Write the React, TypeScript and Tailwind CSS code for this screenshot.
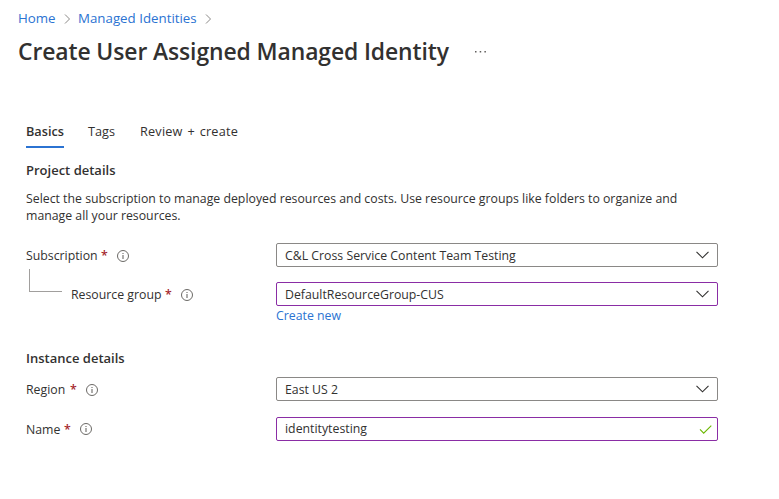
import React from 'react';

function Crumb() {
  return (
    <svg width="7" height="10" viewBox="0 0 7 10" fill="none" stroke="#8a8886" className="mt-px shrink-0">
      <path d="M1 .5 5.5 5 1 9.5" />
    </svg>
  );
}

function Info({ className }: { className: string }) {
  return (
    <svg width="12" height="12" viewBox="0 0 12 12" fill="none" stroke="#6b6966" className={`shrink-0 ${className}`}>
      <circle cx="6" cy="6" r="5.5" />
      <path d="M6 5v4M6 2.9V4" strokeWidth="1.1" />
    </svg>
  );
}

function Chevron() {
  return (
    <svg width="13" height="8" viewBox="0 0 13 8" fill="none" stroke="#323130" strokeWidth="1.1" className="mr-[8px] shrink-0">
      <path d="M.5.8 6.5 6.8 12.5.8" />
    </svg>
  );
}

function Label({ text, width, info = 'mt-px' }: { text: string; width: string; info?: string }) {
  return (
    <div className="flex h-6 items-center whitespace-nowrap">
      <span className={width}>{text}</span>
      <span className="w-[16px] font-semibold text-[#a4262c]">*</span>
      <Info className={info} />
    </div>
  );
}

function Field({ accent, children }: { accent?: boolean; children: React.ReactNode }) {
  return (
    <div
      className={`flex h-6 w-[442px] items-center justify-between rounded-[2px] border pl-2 ${
        accent ? 'border-[#8a2da5]' : 'border-[#8a8886]'
      }`}
    >
      {children}
    </div>
  );
}

export default function App() {
  return (
    <main className="h-[499px] w-[779px] overflow-hidden bg-white font-['Open_Sans','Noto_Sans',sans-serif] text-[12.3px] leading-[17px] text-[#323130]">
      <nav className="mt-[9px] flex h-[18px] items-center pl-[18px] text-[13.3px] text-[#2b73d2]">
        <span className="w-[46px]">Home</span>
        <Crumb />
        <span className="ml-[7px] w-[127px] whitespace-nowrap">Managed Identities</span>
        <Crumb />
      </nav>
      <header className="mt-[9px] flex h-8 items-center pl-[18px]">
        <h1 className="w-[457px] whitespace-nowrap text-[22.9px] font-[560] leading-8 tracking-[-0.1px]">
          Create User Assigned Managed Identity
        </h1>
        <svg width="12" height="2" viewBox="0 0 12 2" fill="#605e5c">
          <path d="M0 0h1.5v1.5H0zM4.7 0h1.5v1.5H4.7zM9.4 0h1.5v1.5H9.4z" />
        </svg>
      </header>
      <div className="mt-[55px] pl-[26px]">
        <div className="flex h-[25px] whitespace-nowrap text-[12.7px]">
          <span className="w-[38px] border-b-2 border-[#2b73d2] font-[580]">Basics</span>
          <span className="ml-6 w-[28px]">Tags</span>
          <span className="ml-[24px] tracking-[0.2px] [word-spacing:1.3px]">Review + create</span>
        </div>
        <h2 className="mt-[14px] text-[13px] font-[570]">Project details</h2>
        <p className="mt-[11px] w-[670px] whitespace-nowrap text-[12.31px]">
          Select the subscription to manage deployed resources and costs. Use resource groups like folders to organize and
          <br />
          manage all your resources.
        </p>
        <div className="mt-[19px] flex">
          <div className="w-[250px]">
            <Label text="Subscription" width="w-[75px]" />
            <div className="mt-[2px] flex h-[37px] pl-[3px]">
              <div className="mr-[9px] h-[23px] w-[33px] border-b border-l border-[#a19f9d]" />
              <div className="mt-[13px]">
                <Label text="Resource group" width="w-[94px]" />
              </div>
            </div>
          </div>
          <div>
            <Field>
              <span>C&amp;L Cross Service Content Team Testing</span>
              <Chevron />
            </Field>
            <div className="mt-[15px]">
              <Field accent>
                <span>DefaultResourceGroup-CUS</span>
                <Chevron />
              </Field>
            </div>
            <div className="mt-px text-[#2b73d2]">Create new</div>
          </div>
        </div>
        <h2 className="mt-[26px] text-[13px] font-[570]">Instance details</h2>
        <div className="mt-[10px] flex">
          <div className="w-[250px]"><Label text="Region" width="w-[44px]" /></div>
          <Field>
            <span>East US 2</span>
            <Chevron />
          </Field>
        </div>
        <div className="mt-[16px] flex">
          <div className="w-[250px]"><Label text="Name" width="w-[38px]" info="mt-0" /></div>
          <Field accent>
            <span className="-mt-px">identitytesting</span>
            <svg width="13" height="9" viewBox="0 0 13 9" fill="none" stroke="#6bb700" strokeWidth="1.1" className="mr-[5px]">
              <path d="M1 4.4 4.7 8.1 12.3.6" />
            </svg>
          </Field>
        </div>
      </div>
    </main>
  );
}
